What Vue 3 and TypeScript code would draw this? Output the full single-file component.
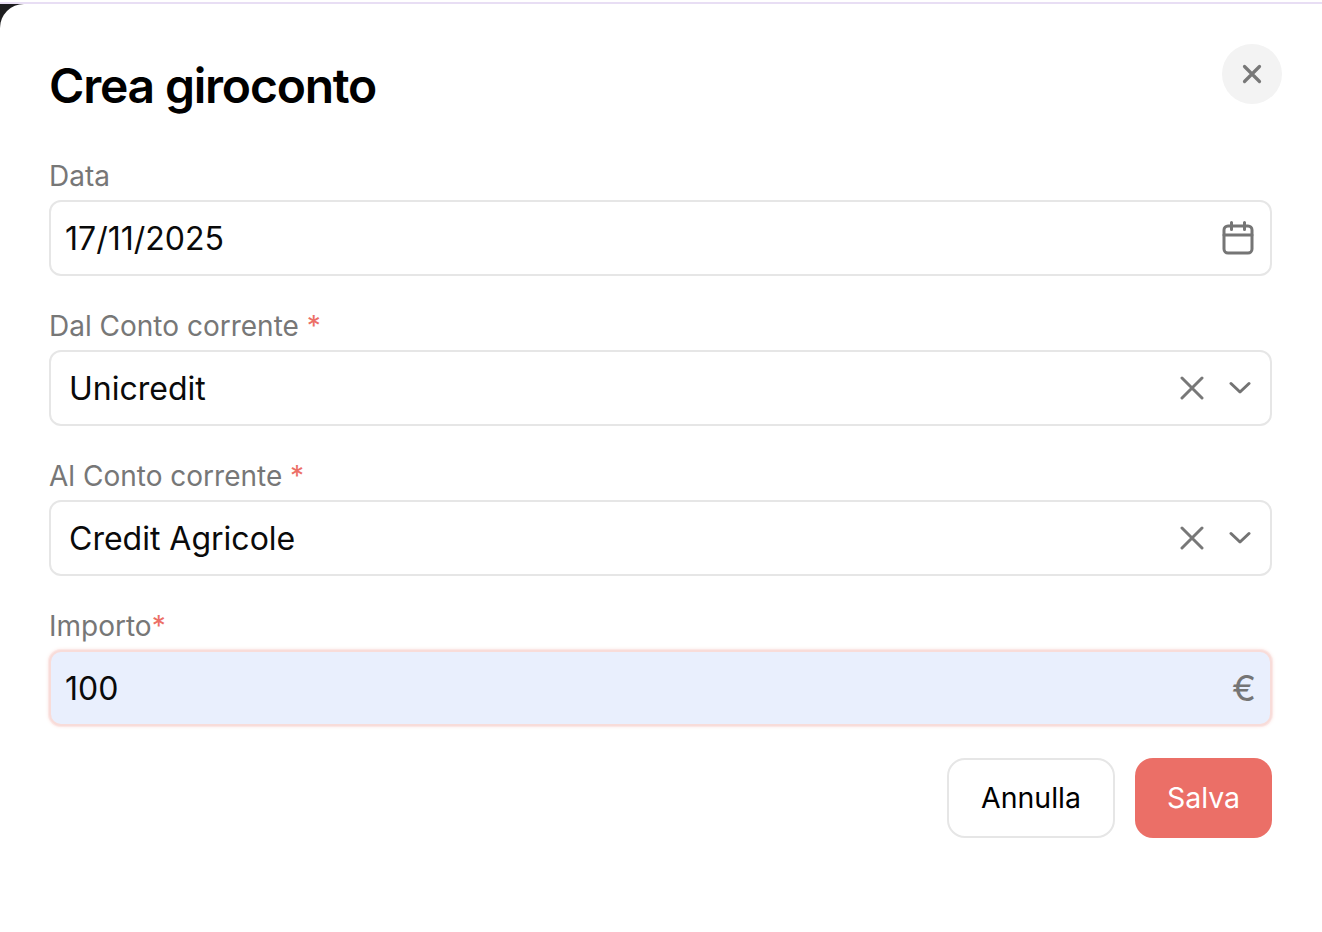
<template>
  <div class="page">
    <div class="top-strip"></div>
    <div class="shell">
      <div class="corner"></div>
      <form class="modal" @submit.prevent>
        <header class="modal-header">
          <h1 class="title">Crea giroconto</h1>
          <button type="button" class="close" aria-label="Chiudi">
            <svg width="20" height="20" viewBox="0 0 20 20" fill="none" stroke="#787878" stroke-width="3.2" stroke-linecap="round">
              <path d="M2.500 2.500l15 15M17.500 2.500l-15 15" />
            </svg>
          </button>
        </header>

        <div class="field field-first">
          <label class="label">Data</label>
          <div class="control">
            <span class="value">17/11/2025</span>
            <svg class="calendar" width="32" height="34" viewBox="0 0 32 34" fill="none" stroke="#757575" stroke-width="3" stroke-linecap="round" stroke-linejoin="round">
              <rect x="2" y="5" width="28" height="27" rx="4" />
              <path d="M2 14h28M9.500 1.500v7M22.500 1.500v7" />
            </svg>
          </div>
        </div>

        <div v-for="account in accounts" :key="account.label" class="field">
          <label class="label">{{ account.label }} <span class="required">*</span></label>
          <div class="control select">
            <span class="value">{{ account.value }}</span>
            <svg class="clear" width="24" height="24" viewBox="0 0 24 24" fill="none" stroke="#787878" stroke-width="3" stroke-linecap="round">
              <path d="M2 2l20 20M22 2L2 22" />
            </svg>
            <svg class="chevron" width="22" height="14" viewBox="0 0 22 14" fill="none" stroke="#737373" stroke-width="3" stroke-linecap="round" stroke-linejoin="round">
              <path d="M2 2.500l9 8.500 9-8.500" />
            </svg>
          </div>
        </div>

        <div class="field">
          <label class="label">Importo<span class="required">*</span></label>
          <div class="control focused">
            <span class="value">100</span>
            <span class="currency">€</span>
          </div>
        </div>

        <footer class="actions">
          <button type="button" class="btn btn-cancel">Annulla</button>
          <button type="submit" class="btn btn-save">Salva</button>
        </footer>
      </form>
    </div>
  </div>
</template>

<script setup lang="ts">
interface Account {
  label: string;
  value: string;
}

const accounts: Account[] = [
  { label: "Dal Conto corrente", value: "Unicredit" },
  { label: "Al Conto corrente", value: "Credit Agricole" },
];
</script>

<style>
html,
body {
  margin: 0;
  background: #fff;
}
</style>

<style scoped>
.page {
  width: 1322px;
  height: 932px;
  overflow: hidden;
  background: #fff;
  font-family: Inter, "Liberation Sans", sans-serif;
}

.top-strip {
  height: 2px;
  margin-top: 2px;
  background: #e8def4;
}

.shell {
  position: relative;
}

.corner {
  position: absolute;
  top: 0;
  left: 0;
  width: 24px;
  height: 24px;
  background: #1d1d1f;
}

.modal {
  position: relative;
  display: flex;
  flex-direction: column;
  padding: 40px 50px 0 50px;
  background: #fff;
  border-radius: 24px 24px 0 0;
}

.modal-header {
  display: flex;
  justify-content: space-between;
  align-items: flex-start;
  height: 72px;
}

.title {
  margin: 15px 0 0 -1px;
  font-size: 48px;
  line-height: 54px;
  font-weight: 600;
  letter-spacing: -1.2px;
  color: #000;
}

.close {
  width: 60px;
  height: 60px;
  margin-right: -10px;
  padding: 0;
  display: flex;
  align-items: center;
  justify-content: center;
  border: none;
  border-radius: 50%;
  background: #f3f3f3;
}

.field {
  margin-top: 30px;
}

.field-first {
  margin-top: 40px;
}

.label {
  display: block;
  height: 40px;
  margin-left: -1px;
  font-size: 28px;
  line-height: 40px;
  color: #777;
  margin-bottom: 4px;
}

.required {
  color: #ec6f67;
}

.control {
  display: flex;
  align-items: center;
  box-sizing: border-box;
  height: 76px;
  margin-left: -1px;
  padding: 0 16px 0 14px;
  border: 2px solid #e6e6e6;
  border-radius: 12px;
  font-size: 32px;
  color: #0a0a0a;
}

.value {
  flex: 1;
}

.select .value {
  padding-left: 4px;
}

.clear {
  margin-right: 25px;
}

.chevron {
  margin-right: 3px;
}

.focused {
  background: #e9effd;
  border-color: #f8dcd9;
  box-shadow: 0 0 0 1px #fbe7e5, 0 0 4px #f8dcd9;
}

.currency {
  margin-right: -2px;
  font-size: 36px;
  color: #757575;
}

.actions {
  display: flex;
  justify-content: flex-end;
  gap: 20px;
  margin-top: 32px;
}

.btn {
  box-sizing: border-box;
  height: 80px;
  padding: 0 0 1px 0;
  font-family: inherit;
  font-size: 28.5px;
  border-radius: 18px;
}

.btn-cancel {
  width: 168px;
  background: #fff;
  border: 2px solid #e6e6e6;
  color: #000;
}

.btn-save {
  width: 137px;
  background: #eb6f67;
  border: none;
  color: #fff;
}
</style>
